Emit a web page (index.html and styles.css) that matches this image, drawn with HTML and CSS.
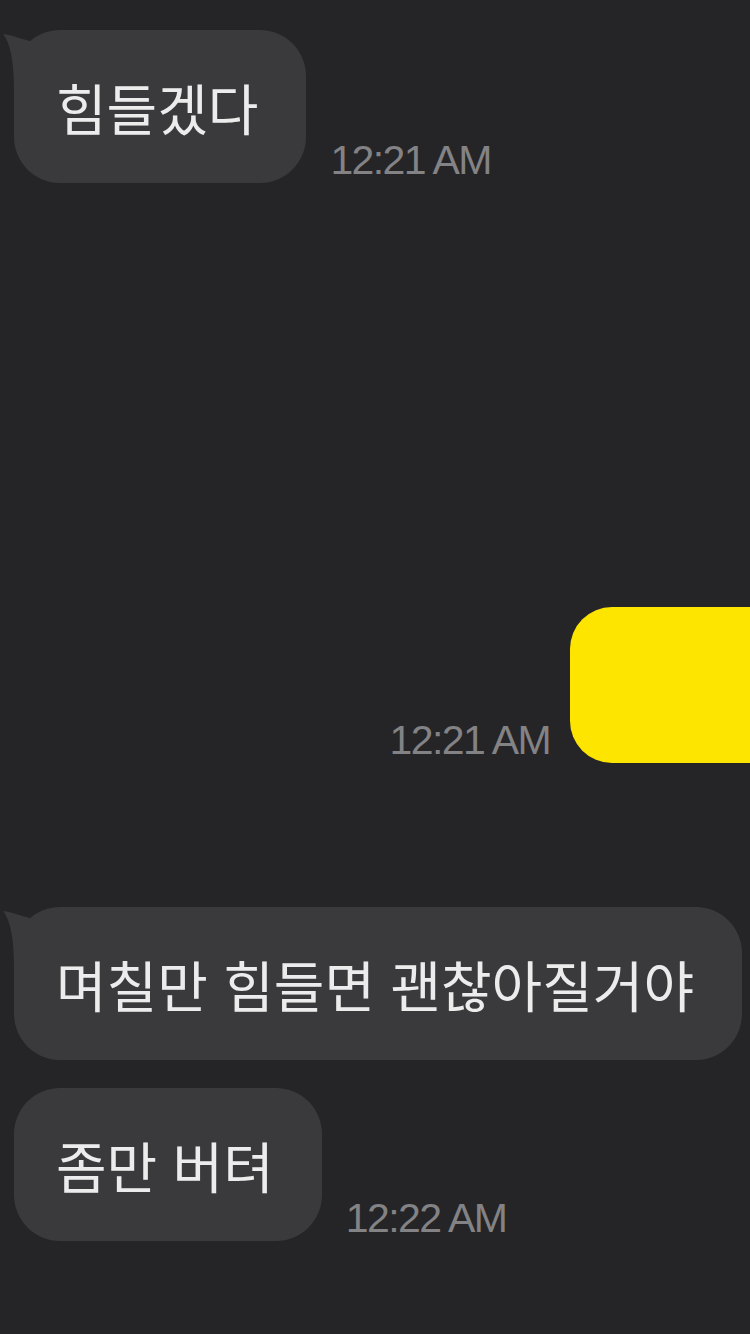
FILE: index.html
```html
<!DOCTYPE html>
<html lang="ko">
<head>
    <meta charset="UTF-8">
    <meta name="viewport" content="width=device-width, initial-scale=1.0">
    <title>채팅</title>
    <link rel="stylesheet" href="styles.css">
</head>
<body>

    <main class="chat">
        <!-- 받은 메시지 -->
        <div class="row in first">
            <div class="bubble tail">
                <svg class="tail-shape" viewBox="-12 0 40 60" width="40" height="60">
                    <path d="M-11 4 C-2 5 8 9 22 13 L22 60 L0 60 C0 34 -3 14 -11 4 Z"/>
                </svg>
                힘들겠다
            </div>
            <span class="time">12:21 AM</span>
        </div>

        <!-- 보낸 메시지 (화면 오른쪽에서 잘림) -->
        <div class="row out">
            <span class="time">12:21 AM</span>
            <div class="bubble mine">&nbsp;</div>
        </div>

        <div class="row in third">
            <div class="bubble tail">
                <svg class="tail-shape" viewBox="-12 0 40 60" width="40" height="60">
                    <path d="M-11 4 C-2 5 8 9 22 13 L22 60 L0 60 C0 34 -3 14 -11 4 Z"/>
                </svg>
                며칠만 힘들면 괜찮아질거야
            </div>
        </div>

        <div class="row in fourth">
            <div class="bubble">좀만 버텨</div>
            <span class="time">12:22 AM</span>
        </div>
    </main>

</body>
</html>
```

FILE: styles.css
```css
body {
    margin: 0;
    background: #252527;
    font-family: "Noto Sans CJK KR", "Noto Sans", sans-serif;
    overflow: hidden;
    height: 1334px;
}

.chat {
    display: flex;
    flex-direction: column;
    padding: 30px 0 0 14px;
}

.row {
    display: flex;
    align-items: flex-end;
    gap: 24px;
}

.row.out {
    justify-content: flex-end;
    margin-top: 424px;
    gap: 20px;
}
.row.third {
    margin-top: 144px;
}
.row.fourth {
    margin-top: 28px;
}

.bubble {
    position: relative;
    background: #3a3a3c;
    color: #ececec;
    font-size: 55px;
    line-height: 61px;
    padding: 46px 48px 46px 42px;
    border-radius: 46px;
    white-space: nowrap;
}

.bubble.mine {
    background: #fee500;
    width: 150px;
    padding: 46px 0 46px 30px;
    line-height: 64px;
    border-radius: 42px 0 0 42px;
}

.tail-shape {
    position: absolute;
    left: -12px;
    top: 0;
    fill: #3a3a3c;
}

.time {
    color: #838285;
    font-family: "Liberation Sans", Arial, sans-serif;
    font-size: 41px;
    letter-spacing: -1.6px;
    line-height: 41px;
    margin-bottom: 2px;
    white-space: nowrap;
}
```
